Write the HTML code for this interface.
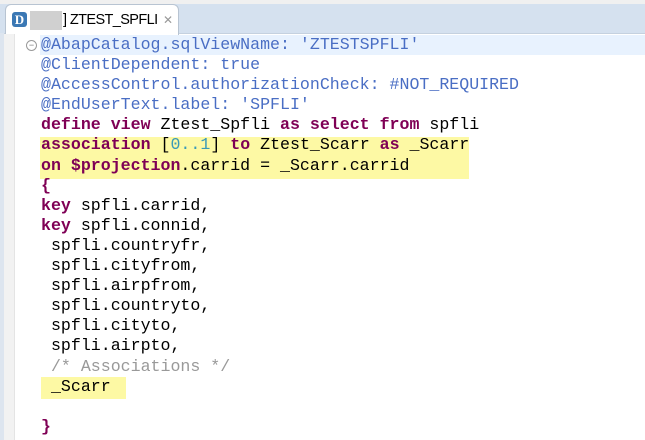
<!DOCTYPE html>
<html><head><style>
body{margin:0;width:645px;height:440px;overflow:hidden;background:#fff;position:relative;font-family:"Liberation Sans",sans-serif}
.top{position:absolute;left:0;top:0;width:645px;height:4px;background:#f0f0f0}
.bar{position:absolute;left:0;top:4px;width:645px;height:29px;background:#d5e1ef;border-bottom:1px solid #c5d1df}
.tab{position:absolute;left:5px;top:4px;width:172px;height:30px;background:#fff;border:1px solid #b8c4d2;border-bottom:none;border-radius:6px 6px 0 0}
.d{position:absolute;left:6px;top:7px;width:15px;height:15px;background:#3b78b4;border-radius:3px;color:#fff;font:bold 13px "Liberation Serif",serif;text-align:center;line-height:15px}
.blur{position:absolute;left:24px;top:6px;width:32px;height:19px;background:#d0d0d0}
.title{position:absolute;left:57px;top:7px;font-size:14.5px;color:#000;white-space:nowrap;letter-spacing:-0.6px}
.x{position:absolute;left:157px;top:8px;font-size:12px;color:#999}
.lb{position:absolute;left:0;top:33px;width:4px;height:407px;background:#dde5ef}
.gut{position:absolute;left:4px;top:34px;width:10px;height:406px;background:#f2f2f2;border-right:1px solid #e4e4e4}
.cur{position:absolute;left:40px;top:35px;width:605px;height:20px;background:#e8f2fe}
.hl1{position:absolute;left:40px;top:137px;width:429px;height:42px;background:#fdf9a4}
.hl2{position:absolute;left:41px;top:377px;width:85px;height:22px;background:#fdf9a4}
.fold{position:absolute;left:26px;top:40px;width:9px;height:9px;border:1px solid #999;border-radius:50%;font-size:9px;line-height:8px;text-align:center;color:#777}
pre{position:absolute;left:41px;top:35px;margin:0;font:16.6px/20.1px "Liberation Mono",monospace;color:#000}
.a{color:#4a6ec4}.k{color:#7f0055;font-weight:bold}.n{color:#3a9ab8}.c{color:#999}
</style></head><body>
<div class="top"></div><div class="bar"></div>
<div class="tab"><div class="d">D</div><div class="blur"></div><div class="title">] ZTEST_SPFLI</div><div class="x">✕</div></div>
<div class="lb"></div><div class="gut"></div>
<div class="cur"></div><div class="hl1"></div><div class="hl2"></div>
<div class="fold">−</div>
<pre><span class="a">@AbapCatalog.sqlViewName: 'ZTESTSPFLI'
@ClientDependent: true
@AccessControl.authorizationCheck: #NOT_REQUIRED
@EndUserText.label: 'SPFLI'</span>
<span class="k">define view</span> Ztest_Spfli <span class="k">as select from</span> spfli
<span class="k">association</span> [<span class="n">0..1</span>] <span class="k">to</span> Ztest_Scarr <span class="k">as</span> _Scarr
<span class="k">on $projection</span>.carrid = _Scarr.carrid
<span class="k">{</span>
<span class="k">key</span> spfli.carrid,
<span class="k">key</span> spfli.connid,
 spfli.countryfr,
 spfli.cityfrom,
 spfli.airpfrom,
 spfli.countryto,
 spfli.cityto,
 spfli.airpto,
 <span class="c">/* Associations */</span>
 _Scarr

<span class="k">}</span></pre>
</body></html>
